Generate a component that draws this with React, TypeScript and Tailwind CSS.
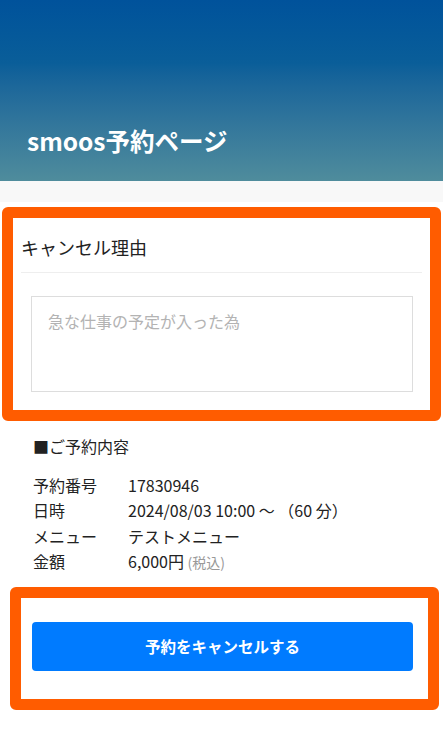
import React from 'react';

const rows = [
  { label: '予約番号', value: '17830946' },
  { label: '日時', value: '2024/08/03 10:00 ～ （60 分）' },
  { label: 'メニュー', value: 'テストメニュー' },
];

const App = () => {
  return (
    <div
      className="min-h-screen bg-white text-[#222]"
      style={{ fontFamily: '"Noto Sans CJK JP", "Noto Sans", sans-serif' }}
    >
      {/* Header */}
      <header className="h-[181px] flex items-end px-[27px] pb-[22px] bg-gradient-to-b from-[#00529b] via-[#0a5e99] via-35% to-[#4f8c9c]">
        <h1 className="text-[24.5px] leading-[36px] font-bold text-white">smoos予約ページ</h1>
      </header>
      <div className="h-[21px] bg-[#f8f8f8]" />

      {/* Cancel reason card */}
      <section className="relative mt-[5px] pb-[29px]">
        <div className="mx-[21px] pt-[27px] pb-[11px] border-b border-[#eeeeee]">
          <h2 className="text-[18px] leading-[27px]">キャンセル理由</h2>
        </div>
        <div className="ml-[31px] mr-[30px] mt-[23px]">
          <textarea
            readOnly
            placeholder="急な仕事の予定が入った為"
            className="block w-full h-[96px] resize-none border border-[#dddddd] px-[16px] pt-[12px] text-[16px] leading-[24px] outline-none placeholder:text-[#b3b3b3]"
          />
        </div>
        <div className="pointer-events-none absolute inset-y-0 left-[2px] right-[2px] rounded-[6px] border-[11px] border-[#ff5c00]" />
      </section>

      {/* Reservation details */}
      <section className="mt-[13px] pl-[33px] pr-[32px]">
        <h3 className="text-[16px] leading-[24px]">■ご予約内容</h3>
        <dl className="mt-[15px] text-[16px] leading-[25.3px]">
          {rows.map((r) => (
            <div key={r.label} className="flex">
              <dt className="w-[95px]">{r.label}</dt>
              <dd>{r.value}</dd>
            </div>
          ))}
          <div className="flex">
            <dt className="w-[95px]">金額</dt>
            <dd>
              6,000円 <span className="text-[14px] text-[#999]">(税込)</span>
            </dd>
          </div>
        </dl>
      </section>

      {/* Cancel button */}
      <section className="relative mt-[12px] pt-[35px] pb-[39px] pl-[32px] pr-[30px]">
        <button className="w-full h-[49px] rounded-[4px] bg-[#007bff] text-white text-[15.5px] font-bold">
          予約をキャンセルする
        </button>
        <div className="pointer-events-none absolute inset-y-0 left-[10px] right-[4px] rounded-[6px] border-[11px] border-[#ff5c00]" />
      </section>
    </div>
  );
};

export default App;
